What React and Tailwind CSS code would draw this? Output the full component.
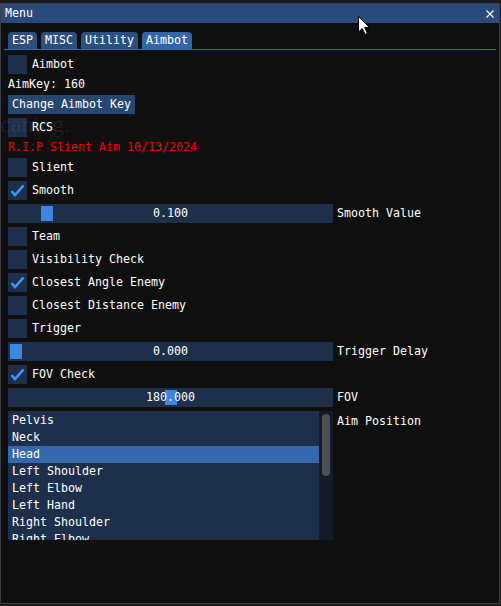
import React from "react";

const font = "font-['DejaVu_Sans_Mono',monospace] text-[11.63px] leading-[13px]";

function Checkbox({ label, checked }) {
  return (
    <div className="flex h-[19px] items-center">
      <div className="w-[19px] h-[19px] bg-[#1d2f4a] shrink-0">
        {checked && (
          <svg width="19" height="19" viewBox="0 0 19 19">
            <path d="M3.5 10 L7 14 L15.5 4.5" stroke="#4296fa" strokeWidth="2.6" fill="none" />
          </svg>
        )}
      </div>
      <span className="ml-[5px] text-white">{label}</span>
    </div>
  );
}

function Slider({ value, t, label }) {
  return (
    <div className="flex h-[19px] items-center">
      <div className="relative w-[325px] h-[19px] bg-[#1d2f4a] flex items-center justify-center shrink-0">
        <div className="absolute top-[2px] w-[12px] h-[15px] bg-[#3d85e0]" style={{ left: 2 + t * 309 }} />
        <span className="relative text-white">{value}</span>
      </div>
      <span className="ml-[4px] text-white">{label}</span>
    </div>
  );
}

const bones = [
  "Pelvis",
  "Neck",
  "Head",
  "Left Shoulder",
  "Left Elbow",
  "Left Hand",
  "Right Shoulder",
  "Right Elbow",
  "Right Hand",
];

function ListBox() {
  return (
    <div className="flex items-start">
      <div className="flex w-[325px] h-[129px] bg-[#1d2f4a] shrink-0">
        <div className="flex-1 overflow-hidden pt-[1px]">
          {bones.map((b) => (
            <div
              key={b}
              className={"h-[17px] px-[4px] flex items-center text-white " + (b === "Head" ? "bg-[#3467ab]" : "")}
            >
              {b}
            </div>
          ))}
        </div>
        <div className="w-[14px] h-full bg-[#131b28] px-[3px] pt-[3px]">
          <div className="w-[8px] h-[62px] rounded-full bg-[#4f4f4f]" />
        </div>
      </div>
      <span className="ml-[4px] pt-[4px] text-white">Aim Position</span>
    </div>
  );
}

export default function App() {
  const tabs = ["ESP", "MISC", "Utility", "Aimbot"];
  return (
    <div className={"relative w-[501px] h-[606px] bg-[#1c1c1c] pt-[3px] " + font}>
      <div className="w-[500px] h-[601px] border border-[#3e3e46] bg-[#0f0f0f] flex flex-col">
        <div className="h-[19px] bg-[#294a7a] flex items-center justify-between pl-[4px] pr-[5px]">
          <span className="text-white">Menu</span>
          <svg width="8" height="8" viewBox="0 0 8 8">
            <path d="M0.5 0.5 L7.5 7.5 M7.5 0.5 L0.5 7.5" stroke="#ffffff" strokeWidth="1.2" />
          </svg>
        </div>
        <div className="px-[7px] pt-[9px] flex flex-col">
          <div className="flex gap-[4px] h-[17px]">
            {tabs.map((tab) => (
              <div
                key={tab}
                className={
                  "px-[4px] pt-[2px] rounded-t-[4px] text-white " +
                  (tab === "Aimbot" ? "bg-[#3366a8]" : "bg-[#2d4f80]")
                }
              >
                {tab}
              </div>
            ))}
          </div>
          <div className="h-[1px] bg-[#3366a8] mx-[-4px]" />
          <div className="flex flex-col gap-[4px] pt-[5px]">
            <Checkbox label="Aimbot" />
            <div className="text-white">AimKey: 160</div>
            <div className="flex">
              <div className="h-[19px] px-[4px] flex items-center bg-[#27476f] text-white">Change Aimbot Key</div>
            </div>
            <Checkbox label="RCS" />
            <div className="text-[#ff0000]">R.I.P Slient Aim 10/13/2024</div>
            <Checkbox label="Slient" />
            <Checkbox label="Smooth" checked />
            <Slider value="0.100" t={0.1} label="Smooth Value" />
            <Checkbox label="Team" />
            <Checkbox label="Visibility Check" />
            <Checkbox label="Closest Angle Enemy" checked />
            <Checkbox label="Closest Distance Enemy" />
            <Checkbox label="Trigger" />
            <Slider value="0.000" t={0} label="Trigger Delay" />
            <Checkbox label="FOV Check" checked />
            <Slider value="180.000" t={0.5} label="FOV" />
            <ListBox />
          </div>
        </div>
      </div>
      <div className="absolute left-0 top-[112px] font-['Liberation_Serif',serif] text-[24px] leading-[24px] text-[rgba(255,255,255,0.08)]">
        caning.
      </div>
      <svg className="absolute left-[358px] top-[16px]" width="13" height="20" viewBox="0 0 13 20">
        <path d="M0.5 0.5 L0.5 16 L4.2 12.4 L7 18.5 L9.4 17.4 L6.7 11.5 L11.5 11.5 Z" fill="#ffffff" stroke="#000000" strokeWidth="1" />
      </svg>
    </div>
  );
}
